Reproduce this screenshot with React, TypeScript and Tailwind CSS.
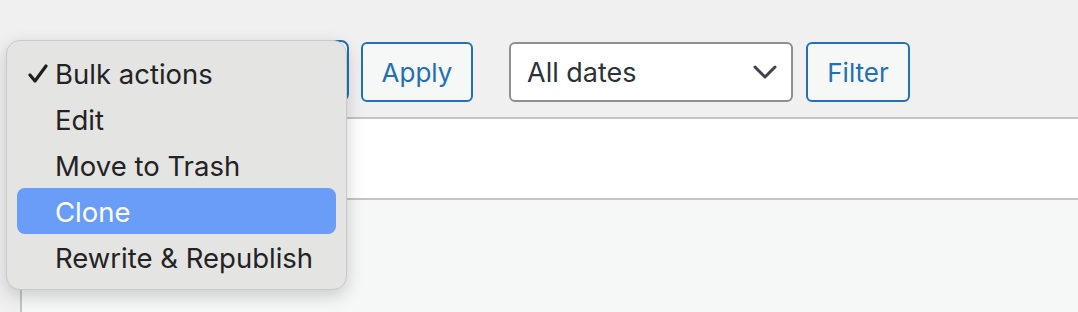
const ITEMS = ["Bulk actions", "Edit", "Move to Trash", "Clone", "Rewrite & Republish"];

function Chevron() {
  return (
    <svg width="24" height="14" viewBox="0 0 24 14" fill="none">
      <path d="M2 2l10 10L22 2" stroke="#3c434a" strokeWidth="3" strokeLinecap="round" strokeLinejoin="round" />
    </svg>
  );
}

function Check() {
  return (
    <svg width="20" height="20" viewBox="0 0 20 20" fill="none">
      <path d="M2 11l5 6L18 2" stroke="#1f1f1f" strokeWidth="3.2" strokeLinecap="round" strokeLinejoin="round" />
    </svg>
  );
}

function BulkMenu() {
  return (
    <div className="absolute left-[6px] top-[40px] w-[341px] h-[250px] rounded-[14px] border border-[#c9c9c9] bg-[#e4e4e3] shadow-[0_6px_18px_rgba(0,0,0,0.18)] px-[10px] pt-[9px]">
      {ITEMS.map((item, i) => {
        const active = item === "Clone";
        return (
          <div
            key={item}
            className={
              active
                ? "relative h-[46px] flex items-center pl-[38px] rounded-[8px] bg-[#699df8] text-white"
                : "relative h-[46px] flex items-center pl-[38px] text-[#232323]"
            }
          >
            {i === 0 && (
              <span className="absolute left-[11px] top-[14px]">
                <Check />
              </span>
            )}
            <span className="pt-[4px] text-[27.5px] leading-none">{item}</span>
          </div>
        );
      })}
    </div>
  );
}

export default function App() {
  return (
    <div className="relative w-[1078px] h-[312px] overflow-hidden bg-[#f0f0f1] font-['Inter','Liberation_Sans',sans-serif]">
      <div className="flex items-start pt-[40px] pl-[20px]">
        <div className="w-[329px] h-[62px] rounded-[8px] border-2 border-[#2271b1] bg-white" />
        <button className="ml-[12px] mt-[2px] w-[112px] h-[60px] rounded-[6px] border-2 border-[#2271b1] bg-[#f6f7f7] text-[#2271b1] text-[26px]">
          Apply
        </button>
        <div className="ml-[36px] mt-[2px] w-[284px] h-[60px] rounded-[6px] border-2 border-[#8c8f94] bg-white flex items-center justify-between pl-[16px] pr-[14px] text-[#2c3338] text-[27px]">
          <span className="pt-[2px]">All dates</span>
          <Chevron />
        </div>
        <button className="ml-[13px] mt-[2px] w-[104px] h-[60px] rounded-[6px] border-2 border-[#2271b1] bg-[#f6f7f7] text-[#2271b1] text-[26px]">
          Filter
        </button>
      </div>
      <div className="ml-[20px] mt-[15px] w-[1100px] border-l-2 border-[#c3c4c7]">
        <div className="h-[83px] bg-white border-y-2 border-[#c3c4c7]" />
        <div className="h-[120px] bg-[#f6f7f7]" />
      </div>
      <BulkMenu />
    </div>
  );
}
